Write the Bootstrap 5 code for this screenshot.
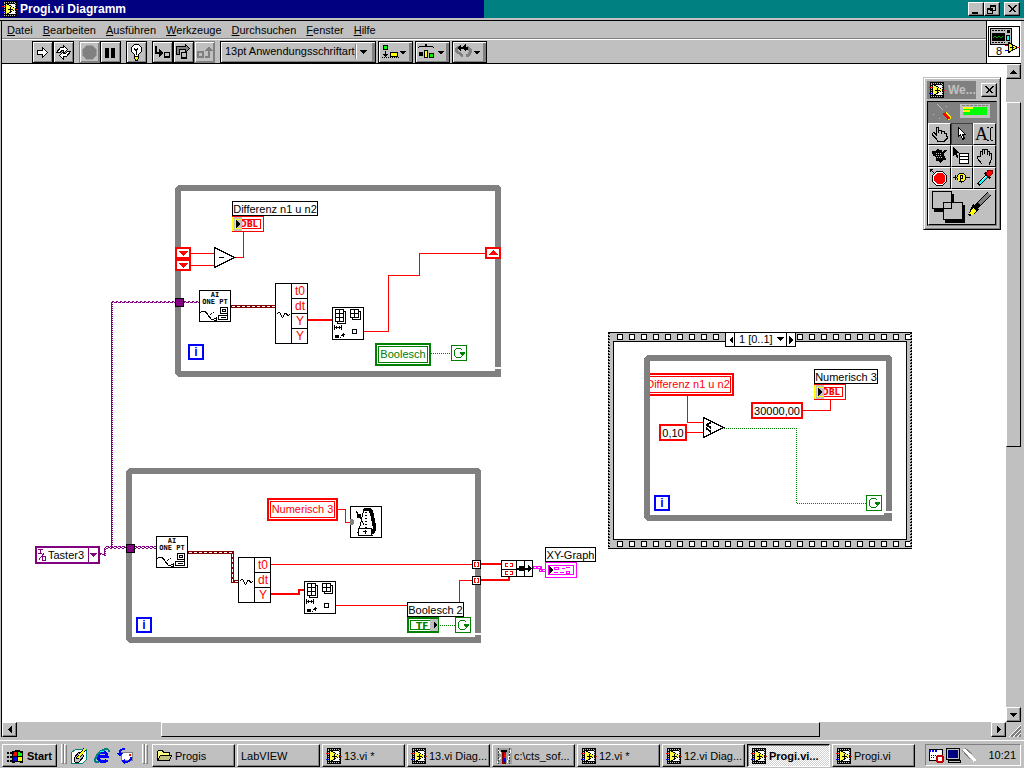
<!DOCTYPE html>
<html lang="de">
<head>
<meta charset="utf-8">
<meta name="viewport" content="width=device-width, initial-scale=1">
<title>Progi.vi Diagramm</title>
<link href="https://cdn.jsdelivr.net/npm/bootstrap@5.3.0/dist/css/bootstrap.min.css" rel="stylesheet">
<style>
:root{--face:#c0c0c0;--shade:#808080;--navy:#000080;--wire:#f00;--bool:#008000;--io:#800080}
body{font:11px/14px "Liberation Sans",Arial,sans-serif;color:#000;background:var(--face);height:100vh;overflow:hidden}
button,select,input{font:inherit;color:inherit;margin:0;padding:0;border-radius:0;appearance:none}
svg{display:block;shape-rendering:crispEdges}
use{fill:#000}
a{color:inherit;text-decoration:none}

.title-strip{height:18px;background:#008080;padding-right:4px}
.title-text{width:484px;height:18px;background:var(--navy);color:#fff;font-size:12px;font-weight:bold;padding-left:2px;gap:2px}
.face-btn{background:var(--face);border:1px solid;border-color:#fff #000 #000 #fff;box-shadow:inset -1px -1px var(--shade);display:flex;align-items:center;justify-content:center}
.cap-btn{width:16px;height:14px}
.win-edge{height:3px;background:var(--face);border-bottom:1px solid #000}
.win-body{margin:0 3px 0 1px;border-left:1px solid #000;min-height:0}
.menu-strip{height:18px;padding:2px 5px 0;gap:10px;border-bottom:1px solid var(--shade)}
.tool-strip{height:25px;border-top:1px solid #fff;border-bottom:1px solid #000;padding:1px 0 0 30px;gap:5px}
.tool-btn{width:21px;height:22px;background:var(--face);border:1px solid #000;box-shadow:inset 1px 1px #fff,inset -1px -1px var(--shade);display:flex;align-items:center;justify-content:center;flex:none}
.tool-btn:disabled{border-color:var(--shade)}
.tool-wide{width:35px;box-shadow:inset 1px 1px #fff,inset -3px -1px var(--shade)}
.tool-set{gap:2px}
.font-box{width:156px;height:22px;border:1px solid #000;box-shadow:inset 1px 1px #fff,inset -3px -1px var(--shade);position:relative}
.font-box select{width:100%;height:18px;border:0;background:none;padding-left:4px;outline:0}
.font-box svg{position:absolute;right:2px;top:2px;pointer-events:none}
.vi-pane{width:35px;background:#fff;border-left:1px solid #000;border-bottom:1px solid #000;padding:5px 1px}

.work{display:grid;grid-template-columns:1fr 15px;grid-template-rows:1fr 15px;min-height:0}
.sheet{background:#fff;position:relative;overflow:hidden;min-width:0}
.sheet>svg{position:absolute;left:0;top:0}
.bar-btn{flex:none;width:15px;height:15px}
.thumb{border:1px solid;border-color:#fff #000 #000 #fff}
.s23{flex:23 1 0}.s344{flex:344 1 0}.s260{flex:260 1 0}
.s144{flex:144 1 0}.s659{flex:659 1 0}.s171{flex:171 1 0}

/* diagram items, placed on the free canvas */
.node{position:absolute;white-space:nowrap;background:#fff}
.cap{border:1px solid #000;height:15px;line-height:14px;text-align:center}
.local{border:2px solid;height:23px;padding:1px}
.local span{display:block;border:1px solid;line-height:15px;text-align:center}
.red{color:var(--wire)}.green{color:var(--bool)}
.const{border:2px solid var(--wire);height:17px;line-height:13px;text-align:center;outline:0}
.iter{width:16px;height:16px;border:2px solid #00f;color:#00f;font-size:12px;font-weight:bold;line-height:12px;text-align:center}
#cap-diff{left:230px;top:137px;width:86px}
#loc-bool{left:373px;top:279px;width:56px}
#it1{left:186px;top:280px}#it2{left:134px;top:553px}#it3{left:652px;top:431px}
#taster{left:33px;top:482px;width:65px;height:18px;border:2px solid var(--io)}
#taster select{border:0;background:none;width:61px;height:14px;padding-left:11px;line-height:13px;outline:0;display:block}
#taster svg{position:absolute;left:0;top:0;pointer-events:none}
#loc-num{left:265px;top:434px;width:71px}
#cap-bool2{left:405px;top:538px;width:57px}
#cap-xy{left:543px;top:483px;width:51px}
#loc-clip{left:648px;top:309px;width:84px;height:23px;overflow:hidden;display:flex;justify-content:flex-end}
#loc-clip .local{width:92px;flex:none}
#c010{left:657px;top:360px;width:28px}
#c300{left:749px;top:338px;width:52px}
#cap-num{left:812px;top:305px;width:64px}
#seq{left:723px;top:268px;width:71px;height:15px;border:1px solid #000}
#seq button{width:8px;border:0;background:#fff;display:flex;align-items:center;justify-content:center}
#seq select{border:solid #000;border-width:0 1px;width:53px;height:13px;padding-left:4px;line-height:13px;background:#fff;outline:0}
#seq .drop{position:absolute;left:50px;top:4px;pointer-events:none}

.palette{position:absolute;right:5px;top:13px;width:78px;background:var(--face);border:1px solid;border-color:var(--face) #000 #000 var(--face);box-shadow:inset 1px 1px #fff,inset -1px -1px var(--shade);padding:3px}
.pal-title{height:18px;gap:5px}
.pal-name{background:var(--shade);color:var(--face);height:18px;width:49px;font-size:12px;font-weight:bold;gap:3px;padding-left:2px}
.pal-grid{display:grid;grid-template-columns:repeat(3,1fr);border:1px solid var(--shade);border-top-color:#000;border-left-color:#000;margin-top:2px}
.pal-grid .wide{grid-column:span 3}
.pal-btn{height:22px;background:var(--face);border:1px solid;border-color:#fff #000 #000 #fff;display:flex;align-items:center;justify-content:center}
.pal-on{background:var(--shade);border-color:#404040}

.taskbar{height:28px;border-top:1px solid #fff;padding:3px 3px 1px 2px}
.task{height:23px;flex:0 1 83px;min-width:0;gap:2px;justify-content:flex-start;padding:0 0 0 3px;white-space:nowrap;overflow:hidden}
.task svg,.start svg{flex:none}
.start{width:55px;height:23px;font-weight:bold;gap:3px}
.task-on{border-color:#000 #fff #fff #000;box-shadow:inset 1px 1px var(--shade);font-weight:bold;background:repeating-conic-gradient(#fff 0 25%,#d0d0d0 0 50%) 0 0/2px 2px}
.grip{width:3px;height:20px;border:1px solid;border-color:#fff var(--shade) var(--shade) #fff}
.quick{gap:7px}
.tray{width:96px;height:22px;border:1px solid;border-color:var(--shade) #fff #fff var(--shade);padding:0 4px 0 2px}
.tasks{gap:2px;min-width:0}
</style>
</head>
<body class="d-flex flex-column">

<svg width="0" height="0" class="position-absolute" aria-hidden="true">
  <symbol id="vi" viewBox="0 0 16 16">
    <path fill="#000" d="M1 0h14v16H1z"/>
    <path stroke="#c0c0c0" stroke-dasharray="1 1" fill="none" d="M2 1.500h12M2 14.500h12"/><path stroke="#c0c0c0" stroke-dasharray="1 1" fill="none" d="M2.500 2v12M13.500 2v12"/>
    <path fill="#fff" d="M4 3h9v10H4z"/>
    <path fill="#000" d="M4 2l11 6-11 6z"/><path fill="#ffff40" d="M4 3l10 5-10 5z"/>
    <path stroke="#000" d="M6 8.500h5M8.500 6v5"/>
    <path stroke="#f00" d="M0 5.500h4M14 8.500h2"/><path stroke="#00f" d="M0 11.500h4"/>
  </symbol>
  <symbol id="aionept" viewBox="0 0 32 32">
    <path fill="#fff" stroke="#000" d="M.5.5h31v31H.5z"/>
    <path fill="none" stroke="#000" d="M1 23l2-2h3l3 4 3 4 3 1h3M11 25l2-2M14 22h1M17 27v4M15 28h3"/>
    <path fill="none" stroke="#000" d="M21.500 17.500h7v6h-7zM23.500 19.500h3v2h-3zM19.500 25.500h9v4h-9zM22 27.500h5M28 23v2"/>
  </symbol>
  <symbol id="index" viewBox="0 0 32 33">
    <path fill="#fff" stroke="#000" d="M.5.5h31v32H.5z"/>
    <path fill="none" stroke="#000" d="M3.500 2.500h8v12h-8zM3 6.500h9M3 10.500h9M7.500 2v13M12 4.500h1.500v12h-8V15M18.500 2.500h8v8h-8zM18 6.500h9M22.500 2v9M27 4.500h1.500v8h-8V11M2.500 18v5M9.500 18v5M3 20.500h7M4.500 19v3M7.500 19v3M20.500 22.500h4v4h-4zM11.500 26v4M9 28.500h2M10 27.500h3"/>
    <path d="M3 28h4v3H3zM8 30h1v1H8z"/>
  </symbol>
  <symbol id="dbl" viewBox="0 0 32 16">
    <path fill="#fff" stroke="#f00" d="M.5.500h31v15H.5zM8.500 3.500h20v9H8z"/>
  </symbol>
  <symbol id="dblarrow" viewBox="0 0 12 16">
    <path fill="#c0c0c0" d="M1 1h9v14H1z"/><path fill="none" stroke="#ff0" stroke-width="2" d="M1 1v14"/><path fill="none" stroke="#ff0" d="M10 3.500H3.500v9H10"/>
    <path d="M4 4v8l4-4z"/>
  </symbol>
  <symbol id="stop" viewBox="0 0 16 16">
    <path fill="#fff" stroke="#008000" d="M.5.500h15v15H.5z"/>
    <path fill="none" stroke="#008000" d="M11.500 5.500l-2-2h-4l-2 2v5l2 2h4l2-2v-1"/><path fill="#008000" d="M9 7h5v2h-1v1h-1v1h-1v-1h-1V9H9z"/>
  </symbol>
  <symbol id="shift" viewBox="0 0 16 12"><path fill="#fff" stroke="#f00" stroke-width="2" d="M1 1h14v10H1z"/><path fill="#f00" d="M3 4h10L8 9z"/></symbol>
  <symbol id="tunnel" viewBox="0 0 9 9"><path fill="#fff" stroke="#000" d="M.5.500h8v8h-8z"/><path fill="none" stroke="#f00" d="M4 2.500H2.500v4H4M5 2.500h1.500v4H5"/></symbol>
  <symbol id="cross" viewBox="0 0 9 8"><path fill="none" stroke="#000" d="M.5.500l7 7M1.500.500l7 7M7.500.500l-7 7M8.500.500l-7 7"/></symbol>
</svg>

<header class="title-strip d-flex align-items-center justify-content-between">
  <div class="title-text d-flex align-items-center"><svg width="16" height="16"><use href="#vi"/></svg>Progi.vi Diagramm</div>
  <div class="d-flex">
    <button class="face-btn cap-btn" aria-label="Minimieren"><svg width="10" height="9"><path d="M1 7h6v2H1z"/></svg></button>
    <button class="face-btn cap-btn me-1" aria-label="Wiederherstellen"><svg width="10" height="9" fill="none" stroke="#000"><path d="M3.500 0v5h5V.5M3 .5h6M3 1.500h6M.5 8.500v-5h5v5zM0 4.500h6"/></svg></button>
    <button class="face-btn cap-btn" aria-label="Schließen"><svg width="9" height="8"><use href="#cross"/></svg></button>
  </div>
</header>
<div class="win-edge"></div>

<main class="win-body d-flex flex-column flex-grow-1">
  <div class="d-flex flex-shrink-0">
    <div class="flex-grow-1">
      <nav class="menu-strip d-flex">
        <a href="#"><u>D</u>atei</a><a href="#"><u>B</u>earbeiten</a><a href="#"><u>A</u>usführen</a><a href="#"><u>W</u>erkzeuge</a><a href="#"><u>D</u>urchsuchen</a><a href="#"><u>F</u>enster</a><a href="#"><u>H</u>ilfe</a>
      </nav>
      <div class="tool-strip d-flex">
        <div class="d-flex">
          <button class="tool-btn" aria-label="Ausführen"><svg width="13" height="13"><path fill="#fff" stroke="#000" d="M1.500 4.500h5v-3l5 5-5 5v-3h-5z"/></svg></button>
          <button class="tool-btn" aria-label="Wiederholt ausführen"><svg width="17" height="15"><path fill="#fff" stroke="#000" d="M1.500 7.500l4-5h3V.5l4 4-4 4V5.500H7l-2 2zM15.500 6.500l-4 5h-3v3l-4-4 4-4v2h2l2-2z"/></svg></button>
        </div>
        <div class="d-flex">
          <button class="tool-btn" disabled aria-label="Abbrechen"><svg width="15" height="15"><path fill="#808080" stroke="#a0a0a0" d="M4.500.5h6l4 4v6l-4 4h-6l-4-4v-6z"/></svg></button>
          <button class="tool-btn" aria-label="Pause"><svg width="11" height="11"><path d="M0 1h4v10H0zM6 1h4v10H6z"/></svg></button>
        </div>
        <button class="tool-btn" aria-label="Highlight"><svg width="13" height="17"><path fill="#fff" stroke="#000" d="M4.500.5h4l3 3v4l-3 3v2h-4v-2l-3-3v-4z"/><path fill="none" stroke="#000" d="M4 4.500l2 2 2-2M6.500 6v5"/><path fill="#ff0" stroke="#000" d="M4.500 12.500h4v2l-1 1.500h-2l-1-1.500z"/></svg></button>
        <div class="d-flex">
          <button class="tool-btn" aria-label="Hineinspringen"><svg width="17" height="15"><path fill="none" stroke="#000" stroke-width="2" d="M2 1v7h5"/><path d="M5 4l4 4-4 4z"/><path fill="#c0c0c0" stroke="#000" d="M10.500 7.500h5v5h-5zM10 11.500h6"/></svg></button>
          <button class="tool-btn" aria-label="Überspringen"><svg width="17" height="16"><path fill="#808080" stroke="#000" d="M1.500 10V2.500h9V.5l4 4-4 4V5.500h-6V10z"/><path fill="#c0c0c0" stroke="#000" d="M6.500 8.500h5v6h-5zM6 13.500h6"/></svg></button>
          <button class="tool-btn" disabled aria-label="Herausspringen"><svg width="17" height="15"><path fill="none" stroke="#808080" stroke-width="2" d="M2 7h5v5H2zM9 12h4V5"/><path fill="#808080" d="M9 6h8l-4-5z"/></svg></button>
        </div>
        <div class="tool-set d-flex">
          <div class="font-box">
            <select aria-label="Schriftart"><option>13pt Anwendungsschriftart</option></select>
            <svg width="18" height="15"><path stroke="#808080" d="M.5 0v15"/><path stroke="#fff" d="M1.500 0v15"/><path d="M5 6h7l-3 4H8z"/></svg>
          </div>
          <button class="tool-btn tool-wide" aria-label="Ausrichten"><svg width="31" height="17"><path fill="#0f0" stroke="#000" d="M3.500 1.500h4v4h-4z"/><path fill="#ff0" stroke="#000" d="M10.500 8.500h7v4h-7z"/><path stroke="#000" stroke-dasharray="1 1" d="M2 13.500h18"/><path d="M5 7h1v3h2l-2.500 3L3 10h2zM20 7h6l-3 4z"/></svg></button>
          <button class="tool-btn tool-wide" aria-label="Verteilen"><svg width="31" height="17"><path fill="none" stroke="#000" d="M1 3.500l2-1h5l1-2 1 2h5l2 1"/><path d="M2 8h4v4H2zM21 7h6l-3 4z"/><path fill="#ff0" stroke="#000" d="M7.500 6.500h3v7h-3z"/><path fill="#0f0" stroke="#000" d="M12.500 9.500h4v4h-4z"/></svg></button>
          <button class="tool-btn tool-wide" aria-label="Neuordnen"><svg width="31" height="17"><path fill="none" stroke="#808080" stroke-width="3" d="M6 3C1 4 2 8 5 9l4 3M13 3c5 2 4 8-1 9"/><path d="M3 4l4-4v3h1l4-3v3h2v3h-2v2L9 5H7v3zM20 7h6l-3 4z"/></svg></button>
        </div>
      </div>
    </div>
    <div class="vi-pane">
      <svg width="32" height="32"><path fill="#fff" stroke="#000" d="M.5.500h31v30H.5z"/><path fill="#c0c0c0" stroke="#000" d="M2.500 2.500h21v16h-21z"/><path fill="#000" d="M4 7h13v8H4zM19 4h3v3h-3z"/><path stroke="#000" stroke-dasharray="2 1" d="M4 4.500h13M4 16.500h13"/><path fill="none" stroke="#00a000" d="M5 12l2-2 2 2 2-2 2 2 2-2"/><path fill="#0ff" stroke="#000" d="M18.500 9.500h3v5h-3z"/><path fill="#ff0" stroke="#000" d="M20.500 16.500v10l9-5z"/><path stroke="#000" d="M22 21.500h4M24 19v5"/><path stroke="#f00" d="M17 19.500h3M29 21.500h3"/><path stroke="#00f" d="M17 24.500h3"/><text x="8" y="29" font-size="11" font-family="Liberation Sans,sans-serif">8</text></svg>
    </div>
  </div>

  <div class="work flex-grow-1">
    <section class="sheet" aria-label="Blockdiagramm">
      <svg width="1004" height="658" fill="none">
        <defs>
          <pattern id="holes" x="614" y="333" width="12" height="8" patternUnits="userSpaceOnUse"><rect x="3.500" y="1.500" width="5" height="5" fill="#fff" stroke="#000"/></pattern>
          <pattern id="holes2" x="614" y="540" width="12" height="8" patternUnits="userSpaceOnUse"><rect x="3.500" y="1.500" width="5" height="5" fill="#fff" stroke="#000"/></pattern>
          <pattern id="zig" width="4" height="4" patternUnits="userSpaceOnUse"><path fill="#800080" d="M0 1h2v1H0zM2 2h2v1H2zM0 2h1v1H0z"/></pattern>
        </defs>
        <g transform="translate(-2 -64)">
          <!-- while loops -->
          <g fill="#808080" fill-rule="evenodd">
            <path d="M178 185h320l3 3v179h-6V191H181v180h314v-2h6v8H178l-3-3V188z"/>
            <path d="M129 468h349l3 3v162h-6V474H132v163h343v-2h6v8H129l-3-3V471z"/>
            <path d="M647 355h242l3 3v153h-6V361H650v154h234v-2h8v8H647l-3-3V358z"/>
          </g>
          <!-- sequence frame -->
          <path fill="#c0c0c0" fill-rule="evenodd" d="M608 332h304v217H608zM614 341v198h293V341z"/>
          <path stroke="#000" d="M608 332.500h304M608 548.500h304M613.500 341.500h293v198h-293z"/>
          <path stroke="#000" stroke-dasharray="2 1" d="M608.500 332v217M911.500 332v217"/><path stroke="#000" stroke-dasharray="1 2" d="M609.500 333v215M910.500 333v215"/>
          <path fill="url(#holes)" d="M614 333h296v8H614z"/><path fill="url(#holes2)" d="M614 540h296v8H614z"/>
          <!-- string wires -->
          <path fill="url(#zig)" d="M112 300h87v4h-87zM106 546h50v2h-50zM100 553h5v4h-5z"/>
          <path stroke="#800080" stroke-dasharray="2 2" d="M106 548.500h50M108 547.500h48"/>
          <path stroke="#800080" d="M111.500 302v246M104.500 548v8"/><path stroke="#800080" stroke-dasharray="1 1" d="M112.500 302v246M105.500 547v9"/>
          <path fill="#800080" stroke="#000" d="M175.500 298.500h8v8h-8zM126.500 544.500h8v8h-8z"/>
          <!-- waveform wires -->
          <path stroke="#800000" stroke-width="3" d="M231 306.500h44M188 552.500h44.500V581.500H238"/>
          <path stroke="#fff" stroke-dasharray="3 2" d="M232 306.500h43M189 552.500h43.500V581.500H238"/>
          <!-- numeric wires -->
          <g stroke="#f00">
            <path d="M191 253.500h23M191 265.500h23M235 257.500h8.500V232M364 331.500h24.500V275.500h31V253.500H485M338 509.500h7.500v13h5M271 564.500h201M336 605.500h123.500V580.500H472M687.500 396v26.500H703M687 432.500h16M803 410.500h27.500V399"/>
            <path stroke-width="2" d="M308 320h24M271 594h28v-4h5M481 564h20M481 580h28v-3"/>
          </g>
          <!-- boolean wires -->
          <path stroke="#008000" stroke-dasharray="1 1" d="M431 353.500h20M440 625.500h15M724 428.500h72.500v75H866"/>
          <!-- cluster wire -->
          <path stroke="#f0f" stroke-width="3" d="M533 567.500h7v3h5"/><path stroke="#fff" stroke-dasharray="2 2" d="M534 567.500h6v3h5"/>
          <use href="#shift" x="175" y="247" width="16" height="12"/><use href="#shift" x="175" y="259" width="16" height="12"/>
          <use href="#shift" width="16" height="12" transform="translate(501 259) rotate(180)"/>
          <path fill="#fff" stroke="#000" d="M214.500 247.500v20l20-10zM703.500 417.500v20l20-10z"/>
          <path stroke="#000" d="M219 257.500h5"/><path stroke="#000" stroke-width="2" d="M711 422l-4 3 4 3M706 428l5 4"/>
          <use href="#dbl" x="232" y="216" width="32" height="16"/><use href="#dbl" x="814" y="384" width="32" height="16"/>
          <g fill="#f00" font-family="DejaVu Sans,sans-serif" font-weight="bold" font-size="8"><text x="240" y="227">DBL</text><text x="822" y="395">DBL</text></g>
          <use href="#dblarrow" x="232" y="216" width="12" height="16"/><use href="#dblarrow" x="814" y="384" width="12" height="16"/>
          <use href="#aionept" x="199" y="290" width="32" height="32"/><use href="#aionept" x="156" y="536" width="32" height="32"/>
          <g fill="#000" font-family="DejaVu Sans Mono,monospace" font-weight="bold" font-size="7" text-anchor="middle">
            <text x="215" y="297">AI</text><text x="215" y="304">ONE PT</text><text x="172" y="543">AI</text><text x="172" y="550">ONE PT</text>
          </g>
          <use href="#index" x="332" y="307" width="32" height="33"/><use href="#index" x="304" y="581" width="32" height="33"/>
          <use href="#stop" x="451" y="345" width="16" height="16"/><use href="#stop" x="455" y="617" width="16" height="16"/><use href="#stop" x="866" y="495" width="16" height="16"/>
          <use href="#tunnel" x="472" y="560" width="9" height="9"/><use href="#tunnel" x="472" y="576" width="9" height="9"/>
          <!-- unbundle nodes -->
          <path fill="#fff" stroke="#000" d="M275.500 283.500h32v60h-32zM291.500 283v60M291 298.500h16M291 313.500h16M291 328.500h16M238.500 557.500h32v45h-32zM254.500 557v45M254 572.500h16M254 587.500h16"/>
          <path stroke="#000" d="M277 314l2-2 1 1 2 4h1l2-4h1l2 3 2-2M240 581l2-2 1 1 2 4h1l2-4h1l2 3 2-2"/>
          <g fill="#f00" font-family="Liberation Sans,sans-serif" font-size="12" text-anchor="middle">
            <text x="300" y="295">t0</text><text x="300" y="310">dt</text><text x="300" y="325">Y</text><text x="300" y="340">Y</text>
            <text x="263" y="569">t0</text><text x="263" y="584">dt</text><text x="263" y="599">Y</text>
          </g>
          <!-- metronome -->
          <path fill="#fff" stroke="#000" d="M350.500 506.500h31v31h-31z"/>
          <path fill="#808080" d="M350 519h3l1 2v2l-1 2h-3z"/>
          <path stroke="#000" d="M363.500 510.500l-4 18M359 528.500h12v4l1 3h-13l-1-3zM359 529l-1 4M356 511l4 6 4 8"/>
          <path fill="#000" d="M357 514h4v4h-4zM363 509l2-1h5l3 3 3 14v5l-2 4h-2v-4l1-2-3-14-1-3h-5z"/>
          <path stroke="#000" stroke-dasharray="1 2" stroke-width="2" d="M366 512v16"/><path stroke="#000" d="M363 531.500h4M365.500 530v4"/>
          <!-- bundle node -->
          <path fill="#fff" stroke="#000" d="M501.500 560.500h31v16h-31zM516.500 560v16M501 569.500h15M524.500 560v16"/>
          <path stroke="#f00" d="M508 563.500h-2.500v3H508M510 563.500h2.500v3H510M508 571.500h-2.500v3H508M510 571.500h2.500v3H510"/>
          <path fill="#000" d="M519 566h6v5h-6zM517 568h12v2h-12zM528 565l4 4-4 3z"/>
          <!-- XY graph terminal -->
          <path fill="#fff" stroke="#f0f" d="M545.500 562.500h31v15h-31zM548.500 565.500h25v9h-25z"/>
          <path fill="#000" d="M549 566v8l4-4z"/><path stroke="#f0f" d="M554.500 567.500h4v2h-4zM554 572.500h4M560 572.500h4M566.500 571.500h3v2h-3zM562 568.500h3M566 567.500h4"/>
          <!-- boolean terminal -->
          <path fill="#fff" stroke="#008000" stroke-width="2" d="M408 618h30v14h-30z"/><path stroke="#008000" d="M410.500 620.500h25v9h-25z"/>
          <text x="416" y="629" fill="#008000" font-family="DejaVu Sans,sans-serif" font-weight="bold" font-size="9">TF</text>
          <path fill="#c0c0c0" d="M430 619h8v12h-8z"/><path fill="#000" d="M434 621v8l3-4z"/>
        </g>
      </svg>

      <div class="node cap" id="cap-diff">Differenz n1 u n2</div>
      <div class="node local green" id="loc-bool"><span>Boolesch</span></div>
      <div class="node iter" id="it1">i</div><div class="node iter" id="it2">i</div><div class="node iter" id="it3">i</div>
      <div class="node" id="taster"><select aria-label="DAQ-Kanal"><option>Taster3</option></select>
        <svg width="61" height="14" fill="none" stroke="#800080"><path d="M1 1.500h5M3.500 1v5M1 5.500h4M2 11.500l5-6M5.500 8.500h3v4h-3zM51.500 0v14"/><path fill="#800080" stroke="none" d="M53 5h7l-3.500 4z"/></svg></div>
      <div class="node local red" id="loc-num"><span>Numerisch 3</span></div>
      <div class="node cap" id="cap-bool2">Boolesch 2</div>
      <div class="node cap" id="cap-xy">XY-Graph</div>
      <div class="node" id="loc-clip"><div class="local red"><span>Differenz n1 u n2</span></div></div>
      <input class="node const" id="c010" aria-label="Grenzwert" value="0,10">
      <input class="node const" id="c300" aria-label="Konstante" value="30000,00">
      <div class="node cap" id="cap-num">Numerisch 3</div>
      <div class="node d-flex" id="seq">
        <button aria-label="Vorheriger Rahmen"><svg width="5" height="8"><path d="M5 0v8L1 4z"/></svg></button>
        <select aria-label="Rahmen"><option>1 [0..1]</option></select>
        <button aria-label="Nächster Rahmen"><svg width="5" height="8"><path d="M0 0v8l5-4z"/></svg></button>
        <svg class="drop" width="8" height="5"><path d="M0 0h8L4 4z"/></svg>
      </div>

      <aside class="palette" aria-label="Werkzeuge">
        <div class="pal-title d-flex align-items-center">
          <div class="pal-name d-flex align-items-center"><svg width="16" height="16"><use href="#vi"/></svg>We...</div>
          <button class="face-btn cap-btn" aria-label="Palette schließen"><svg width="9" height="8"><use href="#cross"/></svg></button>
        </div>
        <div class="pal-grid">
          <div class="wide pal-on"><svg width="68" height="21"><path fill="#c0c0c0" d="M32 2h30v14H32z"/><path stroke="#808080" stroke-dasharray="3 1" d="M34 3.500h26"/><path fill="#0f0" d="M35 5h24v8H35z"/><path stroke="#ff0" stroke-width="2" d="M35 6h10M35 9h7"/><path stroke="#c0c0c0" d="M9 2l6 6M18 4h1M5 12h1M11 16h1M21 17h1"/><path stroke="#ff0" stroke-width="4" d="M17 11l5 6"/><path stroke="#f00" stroke-width="3" d="M16 11l5 6"/></svg></div>
          <button class="pal-btn" aria-label="Bedienen"><svg width="17" height="16"><path fill="none" stroke="#000" d="M5.500 8V1.500h2V7M8 4.500h2l1 3M11 5.500h2l1 2h1l1 3v2l-3 3H7l-2-3-4-4v-1l2-1 3 3"/></svg></button>
          <button class="pal-btn pal-on" aria-label="Positionieren"><svg width="10" height="14"><path fill="#fff" stroke="#000" d="M1.500.5v9l2-2 2 5 2-1-2-4h3z"/></svg></button>
          <button class="pal-btn" aria-label="Text"><svg width="19" height="18"><text x="0" y="15" font-family="Liberation Serif,serif" font-size="18">A</text><path fill="none" stroke="#000" d="M12 2.500h2M16 2.500h2M15.500 3v12M12 15.500h2M16 15.500h2"/></svg></button>
          <button class="pal-btn" aria-label="Verbinden"><svg width="18" height="16"><path d="M2 3h3l3-2 1 1h3v2l2-2h3v1l-3 2 1 5h1v2h-3l-3 3-1-2H6V9L3 8z"/><path stroke="#c0c0c0" stroke-dasharray="1 1" d="M6 5h6M6 7h6M7 9h6"/></svg></button>
          <button class="pal-btn" aria-label="Kontextmenü"><svg width="19" height="18"><path d="M1 0v9l2-2 2 4 1-1-1-4h3z"/><path fill="#fff" stroke="#000" d="M7.500 6.500h9v10h-9zM7 9.500h10M7 12.500h10"/></svg></button>
          <button class="pal-btn" aria-label="Scrollen"><svg width="18" height="17"><path fill="none" stroke="#000" d="M4 9V3.500h2V7M6.500 7V1.500h2V6M9 1.500h2V7M11.500 3.500h2V8M14 5.500h2l-1 7-2 4M4 9l-2-1-1 2 5 6"/></svg></button>
          <button class="pal-btn" aria-label="Haltepunkt"><svg width="18" height="18"><path fill="#fff" stroke="#000" d="M6.500 2.500h6l4 4v6l-4 4h-6l-4-4v-6z"/><path fill="#f00" d="M7 4h5l3 3v5l-3 3H7l-3-3V7z"/><path stroke="#000" d="M0 0l4 4M0 .5h3M.5 0v3"/></svg></button>
          <button class="pal-btn" aria-label="Sonde"><svg width="19" height="14"><path stroke="#000" d="M1 6.500h17M3.500 4v5"/><circle cx="9.500" cy="6.500" r="4.500" fill="#ff0" stroke="#000"/><path fill="none" stroke="#000" d="M8.500 10V4.500h2v3h-2"/></svg></button>
          <button class="pal-btn" aria-label="Farbe aufnehmen"><svg width="18" height="18"><path stroke="#000" stroke-width="4" d="M2 16L12 6"/><path stroke="#0ff" stroke-width="2" d="M3 15l8-8"/><path stroke="#fff" d="M6 11l5-5"/><path d="M9 3l6 6-2 1-5-5z"/><path fill="#f00" stroke="#800000" d="M12 1h4v4l-3 3-3-3z"/></svg></button>
          <button class="wide pal-btn h-auto justify-content-start" aria-label="Farbe setzen"><svg width="66" height="34"><path d="M5 4h20v18H5zM16 15h20v18H16z"/><path fill="#c0c0c0" stroke="#000" d="M14.500 12.500h19v17h-19zM3.500 1.500h19v17h-19z"/><path stroke="#000" stroke-width="5" d="M47 17L60 4"/><path stroke="#808080" stroke-width="3" d="M50 14L60 4"/><path d="M44 14l6 5-3 4-6 3-2-1z"/><path fill="#ff0" d="M40 24l4-6 3 3-4 4z"/></svg></button>
        </div>
      </aside>
    </section>

    <div class="d-flex flex-column" aria-hidden="true">
      <div class="face-btn bar-btn"><svg width="7" height="4"><path d="M0 4h7L3.500 0z"/></svg></div>
      <div class="s23"></div><div class="s344 thumb"></div><div class="s260"></div>
      <div class="face-btn bar-btn"><svg width="7" height="4"><path d="M0 0h7L3.500 4z"/></svg></div>
    </div>
    <div class="d-flex" aria-hidden="true">
      <div class="face-btn bar-btn"><svg width="4" height="7"><path d="M4 0v7L0 3.500z"/></svg></div>
      <div class="s144"></div><div class="s659 thumb"></div><div class="s171"></div>
      <div class="face-btn bar-btn"><svg width="4" height="7"><path d="M0 0v7l4-3.500z"/></svg></div>
    </div>
    <svg width="15" height="15"><path stroke="#fff" d="M3 15L15 3M7 15l8-8M11 15l4-4"/><path stroke="#808080" stroke-width="2" d="M5 15L15 5M9 15l6-6M13 15l2-2"/></svg>
  </div>
</main>
<div class="win-edge border-0"></div>

<footer class="taskbar d-flex align-items-start flex-shrink-0">
  <button class="face-btn start flex-shrink-0"><svg width="17" height="16"><path stroke="#000" stroke-width="2" stroke-dasharray="2 1" d="M0 5h6M0 9h6M0 13h6"/><path d="M5 3l5-1 6 1v12l-6-1-5 1z"/><path fill="#f00" d="M7 4h3v4H6z"/><path fill="#0f0" d="M11 4l4 1v3h-4z"/><path fill="#00f" d="M6 9h4v4H6z"/><path fill="#ff0" d="M11 9h4v4h-4z"/></svg>Start</button>
  <div class="grip ms-1 border-top-0"></div><div class="grip me-1"></div>
  <div class="quick d-flex pt-1 flex-shrink-0">
    <a href="#" aria-label="Desktop anzeigen"><svg width="16" height="16"><path fill="#fff" stroke="#008080" d="M4.500 1.500h11v10l-4 4h-11v-11z"/><path fill="#c0c0c0" stroke="#000" d="M3 10l5-6 5 4-5 6H4z"/><path stroke="#000" stroke-width="3" d="M6 11l8-10"/><path stroke="#ff0" stroke-width="2" d="M7 10l7-9"/></svg></a>
    <a href="#" aria-label="Internet Explorer"><svg width="16" height="16"><path fill="none" stroke="#00f" stroke-width="3" d="M13 12c-2 3-8 3-9-3C4 3 13 2 13 8H5"/><path fill="none" stroke="#008080" stroke-width="2" d="M15 4c1-5-7-3-11 2s-4 10 1 8"/><path stroke="#0ff" d="M6 4l4-1"/></svg></a>
    <a href="#" aria-label="Outlook Express"><svg width="17" height="16"><path fill="#fff" stroke="#808080" d="M4.500 4.500h11v8h-11z"/><path fill="#f00" d="M12 6h2v2h-2z"/><path fill="none" stroke="#00f" stroke-width="2" d="M8 1C3 1 2 4 3 7M14 9c0 4-2 5-6 5"/><path fill="#00f" d="M0 5h6l-3 4zM8 11v5l-4-3z"/></svg></a>
  </div>
  <div class="grip ms-2 border-top-0"></div><div class="grip me-1"></div>
  <div class="tasks d-flex flex-grow-1">
    <button class="face-btn task"><svg width="17" height="15"><path fill="#ffff80" stroke="#000" d="M1.500 12.500v-9l1-1h4l1 2h6v3h2l-2 5z"/><path fill="#c0c080" stroke="#000" d="M1.500 12.500l3-5h11l-2 5z"/></svg><span>Progis</span></button>
    <button class="face-btn task"><span>LabVIEW</span></button>
    <button class="face-btn task"><svg width="16" height="16"><use href="#vi"/></svg><span>13.vi *</span></button>
    <button class="face-btn task"><svg width="16" height="16"><use href="#vi"/></svg><span>13.vi Diag...</span></button>
    <button class="face-btn task"><svg width="16" height="16"><path fill="#a0a0a0" d="M0 0h16v16H0z"/><path stroke="#fff" d="M1 15L5 9M11 15l4-13M2 2l3 4"/><path stroke="#404040" stroke-dasharray="2 1" d="M2.500 0v16M13.500 0v16"/><path fill="#800000" d="M6 3h4v13H6z"/><path fill="#f00" d="M8 5h2v5H8z"/><path fill="#00f" d="M7 10h2v4H7z"/><path d="M5 2h6v2H5z"/></svg><span>c:\cts_sof...</span></button>
    <button class="face-btn task"><svg width="16" height="16"><use href="#vi"/></svg><span>12.vi *</span></button>
    <button class="face-btn task"><svg width="16" height="16"><use href="#vi"/></svg><span>12.vi Diag...</span></button>
    <button class="face-btn task task-on"><svg width="16" height="16"><use href="#vi"/></svg><span>Progi.vi...</span></button>
    <button class="face-btn task"><svg width="16" height="16"><use href="#vi"/></svg><span>Progi.vi</span></button>
  </div>
  <div class="tray d-flex align-items-center justify-content-between flex-shrink-0">
    <svg width="52" height="17"><path fill="#fff" stroke="#000" d="M1.500 2.500h13v11h-13z"/><path stroke="#00f" stroke-dasharray="2 1" stroke-width="2" d="M1 4h8"/><path stroke="#000" stroke-dasharray="1 1" d="M3 8.500h8M3 10.500h4"/><circle cx="12" cy="12" r="3.500" fill="#fff" stroke="#c00000" stroke-width="2"/><path fill="#c0c0c0" stroke="#000" d="M18.500 1.500h13v11h-13zM20.500 13.500h12v2h-12z"/><path fill="#000080" d="M20 3h10v8H20z"/><path stroke="#fff" stroke-width="3" d="M36 2l11 12"/><path stroke="#808080" d="M37 1l7 6M34 3l8 9"/></svg>
    <span>10:21</span>
  </div>
</footer>
<script src="https://cdn.jsdelivr.net/npm/bootstrap@5.3.0/dist/js/bootstrap.bundle.min.js"></script>
</body>
</html>
